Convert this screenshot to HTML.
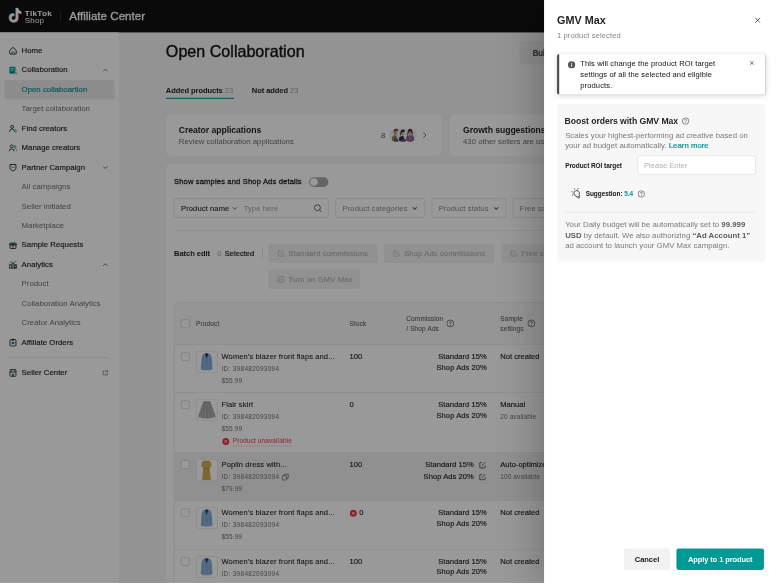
<!DOCTYPE html>
<html lang="en">
<head>
<meta charset="utf-8">
<title>Affiliate Center - Open Collaboration</title>
<style>
*{box-sizing:border-box;margin:0;padding:0}
html,body{width:778px;height:584px;overflow:hidden;background:#fff}
body{font-family:"Liberation Sans",Arial,sans-serif;color:#1f1f1f}
#stage{filter:opacity(0.9999);position:absolute;left:0;top:0;width:1440px;height:1079px;transform:scale(0.540278);transform-origin:0 0;overflow:hidden;background:#f5f5f5;font-size:14px}
.abs{position:absolute}
.med{-webkit-text-stroke:0.35px currentColor}
.b{font-weight:700}
/* header */
#hdr{position:absolute;left:0;top:0;width:1440px;height:60px;background:#121212;color:#fff}
#hdr .ttl{position:absolute;left:128px;top:17px;font-size:21.5px;line-height:26px;white-space:nowrap;-webkit-text-stroke:0.55px #fff}
#hdr .dv{position:absolute;left:111px;top:23px;width:1px;height:15px;background:#5a5a5a}
#hdr .tt{position:absolute;left:46px;top:18px;font-size:15px;line-height:13px;font-weight:700;letter-spacing:0.55px;white-space:nowrap}
#hdr .sh{position:absolute;left:46px;top:31px;font-size:15px;line-height:13px;letter-spacing:0.2px;white-space:nowrap}
/* sidebar */
#side{position:absolute;left:0;top:60px;width:220px;height:1021px;background:#fff}
.it{position:absolute;left:8px;width:204px;height:36px;line-height:35px;font-size:14.4px;letter-spacing:0.04px;white-space:nowrap;border-radius:4px;padding-left:32px;color:#1f1f1f;-webkit-text-stroke:0.25px currentColor}
.it.sub{color:#6e6e6e;-webkit-text-stroke:0}
.it.sel{background:#ebebeb;color:#009995;-webkit-text-stroke:0.25px currentColor}
.it svg.ic{position:absolute;left:8px;top:10px;width:16px;height:16px}
.it svg.ch{position:absolute;left:181px;top:12px;width:12px;height:12px}
/* main */
.card{position:absolute;background:#fff;border-radius:8px}
.ct{position:absolute;left:24px;top:18px;font-size:16px;line-height:22px;font-weight:700;letter-spacing:-0.12px;white-space:nowrap}
.cs{position:absolute;left:24px;top:40px;font-size:14.4px;line-height:20px;letter-spacing:0.0px;color:#707070;white-space:nowrap}
.btn-d{position:absolute;height:36px;border-radius:4px;background:#f2f2f2;color:#b4b4b4;font-size:14px;letter-spacing:0.3px;line-height:36px;white-space:nowrap;-webkit-text-stroke:0.3px currentColor}
.btn-d svg{position:absolute;left:16px;top:11px;width:14px;height:14px}
.btn-d span{position:absolute;left:37px;top:0}
.sel-box{position:absolute;height:36px;border:1px solid #d6d6d6;border-radius:4px;background:#fff;font-size:14px;letter-spacing:0.2px;line-height:34px;color:#8a8a8a;white-space:nowrap}
/* table */
#tbl{position:absolute;left:322px;top:560px;width:1200px;height:600px;border:1px solid #d9d9d9;border-radius:8px;overflow:hidden;background:#fff}
.row{position:absolute;left:0;width:1200px;border-top:1px solid #e3e3e3}
.cb{position:absolute;left:12px;width:16px;height:16px;border:1.5px solid #c4c4c4;border-radius:3px;background:#fff}
.th{position:absolute;font-size:12px;line-height:18px;color:#5e5e5e;white-space:nowrap;letter-spacing:0.25px;-webkit-text-stroke:0.12px currentColor}
.thumb{position:absolute;left:40px;top:12px;width:40px;height:40px;border:1px solid #e2e2e2;border-radius:5px;background:#fff;overflow:hidden}
.thumb svg{position:absolute;left:-1px;top:-1px;width:40px;height:40px}
.pn{position:absolute;left:87px;top:12px;font-size:14px;line-height:20px;letter-spacing:0.17px;white-space:nowrap;-webkit-text-stroke:0.15px currentColor}
.pid{position:absolute;left:87px;top:36px;font-size:12px;line-height:18px;color:#737373;white-space:nowrap;letter-spacing:0.52px}
.pp{position:absolute;left:87px;top:58px;font-size:12px;line-height:18px;color:#737373;white-space:nowrap;letter-spacing:0.3px}
.stk{position:absolute;left:324px;top:11px;font-size:14px;line-height:20px;white-space:nowrap;-webkit-text-stroke:0.25px currentColor}
.com{position:absolute;left:380px;width:198px;top:12px;font-size:14px;line-height:19.5px;text-align:right;white-space:nowrap;-webkit-text-stroke:0.25px currentColor;letter-spacing:0.1px}
.smp{position:absolute;left:603px;top:11px;font-size:14px;line-height:20px;white-space:nowrap;-webkit-text-stroke:0.25px currentColor}
.smp small{display:block;font-size:12px;line-height:18px;color:#737373;-webkit-text-stroke:0;margin-top:5px;letter-spacing:0.2px}
/* overlay + drawer */
#dim{position:absolute;left:0;top:0;width:1440px;height:1079px;background:rgba(0,0,0,0.4)}
#drw{position:absolute;left:1007px;top:0;width:433px;height:1081px;background:#fff;box-shadow:-16px 0 64px rgba(0,0,0,0.22)}
</style>
</head>
<body>
<div id="stage">

<!-- HEADER -->
<div id="hdr">
  <svg class="abs" style="left:14px;top:13px;width:28px;height:31px" viewBox="0 0 28 31">
    <path d="M15.5 2 h4.2 c0.3 3.2 2.3 5.6 5.6 6 v4.3 c-2.100 0-4.000-0.700-5.600-1.800 v9.500 c0 5.200-4.000 8.600-8.400 8.600 c-4.800 0-8.500-3.800-8.500-8.400 c0-5.000 4.200-8.900 9.600-8.300 v4.500 c-2.700-0.600-5.100 1.200-5.100 3.800 c0 2.300 1.800 4.000 4.000 4.000 c2.400 0 4.200-1.800 4.200-4.400 z" fill="#25f4ee" transform="translate(-1,-0.8)"/>
    <path d="M15.5 2 h4.2 c0.3 3.2 2.3 5.6 5.6 6 v4.3 c-2.100 0-4.000-0.700-5.600-1.800 v9.500 c0 5.200-4.000 8.600-8.400 8.600 c-4.800 0-8.500-3.800-8.500-8.400 c0-5.000 4.200-8.900 9.600-8.300 v4.500 c-2.700-0.600-5.100 1.200-5.100 3.800 c0 2.300 1.800 4.000 4.000 4.000 c2.400 0 4.200-1.800 4.200-4.400 z" fill="#fe2c55" transform="translate(1,0.8)"/>
    <path d="M15.5 2 h4.2 c0.3 3.2 2.3 5.600 5.600 6 v4.300 c-2.100 0-4.000-0.700-5.600-1.800 v9.500 c0 5.200-4.000 8.600-8.400 8.600 c-4.800 0-8.500-3.800-8.500-8.400 c0-5.000 4.200-8.900 9.600-8.300 v4.500 c-2.700-0.600-5.100 1.200-5.100 3.800 c0 2.300 1.800 4.000 4.000 4.000 c2.400 0 4.200-1.800 4.200-4.400 z" fill="#fff"/>
  </svg>
  <div class="tt">TikTok</div>
  <div class="sh">Shop</div>
  <div class="dv"></div>
  <div class="ttl">Affiliate Center</div>
</div>

<!-- SIDEBAR -->
<div id="side">
  <div class="it" style="top:16px"><svg class="ic" viewBox="0 0 16 16"><path d="M2 7 L8 1.700 L14 7 V12.800 a1.300 1.300 0 0 1 -1.300 1.300 H3.300 a1.300 1.300 0 0 1 -1.300 -1.300 Z" fill="none" stroke="#2b2b2b" stroke-width="1.700" stroke-linejoin="round"/><path d="M5.600 14 V12 a2.400 2.400 0 0 1 4.800 0 V14" fill="none" stroke="#009995" stroke-width="1.700"/></svg>Home</div>
  <div class="it" style="top:52px"><svg class="ic" viewBox="0 0 16 16"><rect x="1.500" y="1.500" width="11" height="13" rx="1.500" fill="#009995"/><rect x="4" y="4.500" width="6" height="1.400" fill="#fff"/><rect x="4" y="7.500" width="3.500" height="1.400" fill="#fff"/><circle cx="12" cy="9.500" r="1.800" fill="#fff" stroke="#009995" stroke-width="1"/><path d="M9 15 a3 3 0 0 1 6 0 z" fill="#fff" stroke="#009995" stroke-width="1"/></svg>Collaboration<svg class="ch" viewBox="0 0 12 12"><path d="M2 8 L6 4 L10 8" fill="none" stroke="#555" stroke-width="1.500"/></svg></div>
  <div class="it sub sel" style="top:88px">Open collaboartion</div>
  <div class="it sub" style="top:124px">Target collaboration</div>
  <div class="it" style="top:160px"><svg class="ic" viewBox="0 0 16 16"><circle cx="6.500" cy="4.800" r="2.800" fill="none" stroke="#2b2b2b" stroke-width="1.600"/><path d="M1.500 14 a5 5 0 0 1 8.500-3.500" fill="none" stroke="#2b2b2b" stroke-width="1.600"/><circle cx="12" cy="12" r="2" fill="none" stroke="#009995" stroke-width="1.500"/><path d="M13.500 13.500 L15 15" stroke="#009995" stroke-width="1.500"/></svg>Find creators</div>
  <div class="it" style="top:196px"><svg class="ic" viewBox="0 0 16 16"><circle cx="5.500" cy="4.800" r="2.600" fill="none" stroke="#2b2b2b" stroke-width="1.600"/><path d="M1 14 a4.500 4.500 0 0 1 9 0" fill="none" stroke="#2b2b2b" stroke-width="1.600"/><circle cx="11.500" cy="5.500" r="2" fill="none" stroke="#009995" stroke-width="1.400"/><path d="M11.500 9.500 a3.500 3.500 0 0 1 3.500 4.500" fill="none" stroke="#009995" stroke-width="1.400"/></svg>Manage creators</div>
  <div class="it" style="top:232px"><svg class="ic" viewBox="0 0 16 16"><path d="M2.500 2.500 H13.500 V9 C13.500 11.500 11 13.500 8 14.500 C5 13.500 2.500 11.500 2.500 9 Z" fill="none" stroke="#2b2b2b" stroke-width="1.700" stroke-linejoin="round"/><path d="M5.500 6 a2.500 2.500 0 0 0 5 0" fill="none" stroke="#009995" stroke-width="1.500"/></svg>Partner Campaign<svg class="ch" viewBox="0 0 12 12"><path d="M2 4 L6 8 L10 4" fill="none" stroke="#555" stroke-width="1.500"/></svg></div>
  <div class="it sub" style="top:268px">All campaigns</div>
  <div class="it sub" style="top:304px">Seller initiated</div>
  <div class="it sub" style="top:340px">Marketplace</div>
  <div class="it" style="top:376px"><svg class="ic" viewBox="0 0 16 16"><rect x="2.500" y="7" width="11" height="7" rx="1" fill="none" stroke="#2b2b2b" stroke-width="1.600"/><rect x="1.500" y="4.500" width="13" height="3" rx="0.800" fill="none" stroke="#2b2b2b" stroke-width="1.500"/><path d="M8 4.500 V14" stroke="#2b2b2b" stroke-width="1.500"/><path d="M8 4.500 C6 1 3.500 2 5 4.500 M8 4.500 C10 1 12.500 2 11 4.500" fill="none" stroke="#009995" stroke-width="1.400"/></svg>Sample Requests</div>
  <div class="it" style="top:412px"><svg class="ic" viewBox="0 0 16 16"><rect x="1.500" y="8" width="3.400" height="6.500" fill="none" stroke="#2b2b2b" stroke-width="1.400"/><rect x="6.300" y="6" width="3.400" height="8.500" fill="none" stroke="#2b2b2b" stroke-width="1.400"/><rect x="11.100" y="8" width="3.400" height="6.500" fill="none" stroke="#2b2b2b" stroke-width="1.400"/><path d="M1.500 5 L5.500 2.500 L9 4.500 L14 1.500" fill="none" stroke="#009995" stroke-width="1.500"/></svg>Analytics<svg class="ch" viewBox="0 0 12 12"><path d="M2 8 L6 4 L10 8" fill="none" stroke="#555" stroke-width="1.500"/></svg></div>
  <div class="it sub" style="top:448px">Product</div>
  <div class="it sub" style="top:484px">Collaboration Analytics</div>
  <div class="it sub" style="top:520px">Creator Analytics</div>
  <div class="it" style="top:556px"><svg class="ic" viewBox="0 0 16 16"><rect x="2.500" y="2.500" width="11" height="12" rx="1.500" fill="none" stroke="#2b2b2b" stroke-width="1.700"/><rect x="5.500" y="1" width="5" height="3" rx="0.800" fill="#2b2b2b"/><rect x="5.500" y="6.500" width="5" height="4.500" fill="#009995"/></svg>Affiliate Orders</div>
  <div class="abs" style="left:16px;top:601px;width:186px;height:1px;background:#dcdcdc"></div>
  <div class="it" style="top:612px"><svg class="ic" viewBox="0 0 16 16"><rect x="2.500" y="2" width="11" height="12.500" rx="1.200" fill="none" stroke="#2b2b2b" stroke-width="1.600"/><path d="M2.500 6.500 H13.500" stroke="#2b2b2b" stroke-width="1.600"/><rect x="6" y="9.500" width="4" height="5" fill="#009995"/><path d="M5 2 V6 M11 2 V6" stroke="#2b2b2b" stroke-width="1.200"/></svg>Seller Center<svg class="ch" viewBox="0 0 12 12"><path d="M5 2 H2 V10 H10 V7" fill="none" stroke="#777" stroke-width="1.300"/><path d="M7 2 H10 V5 M10 2 L5.500 6.500" fill="none" stroke="#777" stroke-width="1.300"/></svg></div>
</div>

<!-- MAIN -->
<div id="main">
  <div class="abs" style="left:307px;top:75px;font-size:29.8px;line-height:40px;white-space:nowrap;color:#161616;-webkit-text-stroke:0.75px #161616">Open Collaboration</div>
  <div class="abs" style="left:962px;top:76px;width:200px;height:44px;border-radius:4px;background:#ebebeb"></div>
  <div class="abs med" style="left:986px;top:88px;font-size:15.5px;line-height:20px;white-space:nowrap">Bulk actions</div>

  <div class="abs b" style="left:307px;top:158px;font-size:14px;line-height:20px;letter-spacing:-0.15px;white-space:nowrap">Added products <span style="font-weight:400;color:#a3a3a3;letter-spacing:0">23</span></div>
  <div class="abs" style="left:307px;top:181px;width:126px;height:2px;background:#009995"></div>
  <div class="abs b" style="left:466px;top:158px;font-size:14px;line-height:20px;letter-spacing:-0.15px;white-space:nowrap">Not added <span style="font-weight:400;color:#a3a3a3;letter-spacing:0">23</span></div>

  <div class="card" style="left:307px;top:212px;width:510px;height:76px">
    <div class="ct">Creator applications</div>
    <div class="cs">Review collaboration applications</div>
    <div class="abs" style="left:398px;top:27.500px;font-size:14.5px;line-height:20px;color:#555">8</div>
    <svg class="abs" style="left:413px;top:24px;width:52px;height:28px" viewBox="0 0 52 28">
      <defs><clipPath id="c1"><circle cx="13" cy="14" r="12.500"/></clipPath><clipPath id="c2"><circle cx="26" cy="14" r="12.500"/></clipPath><clipPath id="c3"><circle cx="39" cy="14" r="12.500"/></clipPath></defs>
      <g clip-path="url(#c1)"><rect x="0" y="0" width="27" height="28" fill="#ececec"/><path d="M5 28 L6 17 Q13 12 20 17 L21 28 Z" fill="#8f7f4a"/><path d="M9 28 L10 20 H16 L17 28 Z" fill="#47698c"/><ellipse cx="13" cy="9.500" rx="4" ry="5" fill="#c99a78"/><path d="M8.500 9 Q8 3 13 2.500 Q18.500 3 17.500 9 Q16 5.500 13 5.500 Q10 5.500 8.500 9 Z" fill="#5e3f26"/></g>
      <g clip-path="url(#c2)"><rect x="13" y="0" width="27" height="28" fill="#e6e8ec"/><path d="M18 28 L19 18 Q26 13 33 18 L34 28 Z" fill="#2a3152"/><path d="M23 28 L24 22 H28 L29 28 Z" fill="#c7455c"/><ellipse cx="26" cy="10.500" rx="3.800" ry="4.800" fill="#d3a58a"/><path d="M20.500 18 Q20 3.500 26 3.500 Q32 3.500 31.500 18 Q30 9 26 7.500 Q22 9 20.500 18 Z" fill="#251d28"/></g>
      <g clip-path="url(#c3)"><rect x="26" y="0" width="27" height="28" fill="#eeeeee"/><path d="M31 28 L32 17 Q39 12 46 17 L47 28 Z" fill="#4b7cb3"/><path d="M35.500 28 L36 16 H42 L42.500 28 Z" fill="#de4f79"/><ellipse cx="39" cy="9.500" rx="3.600" ry="4.600" fill="#d5a68c"/><path d="M34 20 Q33 2.500 39 2.500 Q45 2.500 44 20 Q43 8 39 6.500 Q35 8 34 20 Z" fill="#47291f"/></g>
    </svg>
    <svg class="abs" style="left:472px;top:31px;width:14px;height:14px" viewBox="0 0 14 14"><path d="M4.500 2.300 L9.500 7 L4.500 11.700" fill="none" stroke="#707070" stroke-width="1.700"/></svg>
  </div>
  <div class="card" style="left:833px;top:212px;width:510px;height:76px">
    <div class="ct">Growth suggestions</div>
    <div class="cs">430 other sellers are using these</div>
  </div>

  <div class="card" style="left:307px;top:304px;width:1200px;height:900px;border-radius:8px"></div>
  <div class="abs" style="left:322px;top:326px;font-size:14px;line-height:20px;letter-spacing:0.3px;white-space:nowrap;-webkit-text-stroke:0.5px #1f1f1f">Show samples and Shop Ads details</div>
  <div class="abs" style="left:572px;top:328px;width:36px;height:18px;border-radius:9px;background:#a8a8a8"><div class="abs" style="left:2px;top:2px;width:14px;height:14px;border-radius:7px;background:#fff"></div></div>

  <div class="sel-box" style="left:322px;top:367px;width:286px">
    <span class="abs" style="left:12px;top:0;color:#1f1f1f;-webkit-text-stroke:0.15px #1f1f1f;letter-spacing:0.2px">Product name</span>
    <svg class="abs" style="left:106px;top:12px;width:11px;height:11px" viewBox="0 0 12 12"><path d="M2 4 L6 8 L10 4" fill="none" stroke="#444" stroke-width="1.500"/></svg>
    <span class="abs" style="left:128px;top:0;color:#a6a6a6">Type here</span>
    <svg class="abs" style="left:257px;top:9px;width:17px;height:17px" viewBox="0 0 17 17"><circle cx="7.500" cy="7.500" r="5.500" fill="none" stroke="#555" stroke-width="1.600"/><path d="M11.500 11.500 L15.500 15.500" stroke="#555" stroke-width="1.600"/></svg>
  </div>
  <div class="sel-box" style="left:621px;top:367px;width:166px"><span class="abs" style="left:12px;top:0">Product categories</span><svg class="abs" style="left:140px;top:12px;width:11px;height:11px" viewBox="0 0 12 12"><path d="M2 4 L6 8 L10 4" fill="none" stroke="#5a5a5a" stroke-width="2.200"/></svg></div>
  <div class="sel-box" style="left:799px;top:367px;width:138px"><span class="abs" style="left:12px;top:0">Product status</span><svg class="abs" style="left:113px;top:12px;width:11px;height:11px" viewBox="0 0 12 12"><path d="M2 4 L6 8 L10 4" fill="none" stroke="#5a5a5a" stroke-width="2.200"/></svg></div>
  <div class="sel-box" style="left:949px;top:367px;width:140px"><span class="abs" style="left:12px;top:0">Free samples</span></div>

  <div class="abs" style="left:322px;top:426px;width:1100px;height:1px;background:#e0e0e0"></div>

  <div class="abs b" style="left:322px;top:459px;font-size:14px;line-height:20px;letter-spacing:-0.1px;white-space:nowrap">Batch edit</div>
  <div class="abs" style="left:402px;top:459px;font-size:14px;line-height:20px;white-space:nowrap;color:#9a9a9a">0</div>
  <div class="abs med" style="left:416px;top:459px;font-size:14px;line-height:20px;white-space:nowrap">Selected</div>
  <div class="abs" style="left:485px;top:461px;width:1px;height:16px;background:#cfcfcf"></div>

  <div class="btn-d" style="left:497px;top:451px;width:202px"><svg viewBox="0 0 14 14"><path d="M6.500 2 H3 a1 1 0 0 0 -1 1 V11 a1 1 0 0 0 1 1 H11 a1 1 0 0 0 1 -1 V7.500" fill="none" stroke="#b4b4b4" stroke-width="1.400"/><path d="M6 8 L12 2" stroke="#b4b4b4" stroke-width="1.500"/></svg><span>Standard commissions</span></div>
  <div class="btn-d" style="left:711px;top:451px;width:204px"><svg viewBox="0 0 14 14"><path d="M6.500 2 H3 a1 1 0 0 0 -1 1 V11 a1 1 0 0 0 1 1 H11 a1 1 0 0 0 1 -1 V7.500" fill="none" stroke="#b4b4b4" stroke-width="1.400"/><path d="M6 8 L12 2" stroke="#b4b4b4" stroke-width="1.500"/></svg><span>Shop Ads commissions</span></div>
  <div class="btn-d" style="left:928px;top:451px;width:150px"><svg viewBox="0 0 14 14"><path d="M6.500 2 H3 a1 1 0 0 0 -1 1 V11 a1 1 0 0 0 1 1 H11 a1 1 0 0 0 1 -1 V7.500" fill="none" stroke="#b4b4b4" stroke-width="1.400"/><path d="M6 8 L12 2" stroke="#b4b4b4" stroke-width="1.500"/></svg><span>Free samples</span></div>
  <div class="btn-d" style="left:497px;top:499px;width:169px"><svg viewBox="0 0 14 14"><rect x="1.500" y="2" width="11" height="10" rx="1.500" fill="none" stroke="#b4b4b4" stroke-width="1.400"/><path d="M3.500 8.500 L6 6 L8 8 L10.500 5" fill="none" stroke="#b4b4b4" stroke-width="1.300"/></svg><span>Turn on GMV Max</span></div>

  <!-- TABLE -->
  <div id="tbl">
    <div class="abs" style="left:0;top:0;width:1200px;height:76px;background:#f8f8f8"></div>
    <div class="cb" style="top:30px"></div>
    <div class="th" style="left:40px;top:29px">Product</div>
    <div class="th" style="left:324px;top:29px">Stock</div>
    <div class="th" style="left:429px;top:20px">Commission<br>/ Shop Ads</div>
    <svg class="abs" style="left:503px;top:30px;width:15px;height:15px" viewBox="0 0 14 14"><circle cx="7" cy="7" r="6" fill="none" stroke="#4a4a4a" stroke-width="1.200"/><path d="M5.200 5.600 a1.800 1.800 0 1 1 2.600 1.600 c-0.600 0.300-0.800 0.600-0.800 1.300" fill="none" stroke="#4a4a4a" stroke-width="1.200"/><circle cx="7" cy="10.300" r="0.800" fill="#4a4a4a"/></svg>
    <div class="th" style="left:603px;top:20px">Sample<br>settings</div>
    <svg class="abs" style="left:653px;top:30px;width:15px;height:15px" viewBox="0 0 14 14"><circle cx="7" cy="7" r="6" fill="none" stroke="#4a4a4a" stroke-width="1.200"/><path d="M5.200 5.600 a1.800 1.800 0 1 1 2.600 1.600 c-0.600 0.300-0.800 0.600-0.800 1.300" fill="none" stroke="#4a4a4a" stroke-width="1.200"/><circle cx="7" cy="10.300" r="0.800" fill="#4a4a4a"/></svg>

    <!-- row 1 -->
    <div class="row" style="top:76px;height:89px">
      <div class="cb" style="top:14px"></div>
      <div class="thumb"><svg viewBox="0 0 40 40"><path d="M15.500 4.500 L23.500 4.500 L27.500 7 L29 14 L30.500 33.500 L27 34.500 L27 35.500 L12 35.500 L12 34.500 L8.500 33.500 L10 14 L11.500 7 Z" fill="#8db4da"/><path d="M12.500 12 L12 34 M26.500 12 L27 34" stroke="#7199c0" stroke-width="0.900" fill="none"/><path d="M16.500 4.500 L19.500 14 L22.500 4.500 Z" fill="#1d2a3c"/><path d="M16 5 L19.500 15 L23 5" stroke="#6a91b8" stroke-width="1" fill="none"/><path d="M19.500 15 V35" stroke="#7199c0" stroke-width="0.800"/><circle cx="17.500" cy="20" r="0.700" fill="#5b7fa5"/><circle cx="21.500" cy="20" r="0.700" fill="#5b7fa5"/><circle cx="17.500" cy="25" r="0.700" fill="#5b7fa5"/><circle cx="21.500" cy="25" r="0.700" fill="#5b7fa5"/></svg></div>
      <div class="pn">Women's blazer front flaps and...</div>
      <div class="pid">ID: 398482093094</div>
      <div class="pp">$55.99</div>
      <div class="stk">100</div>
      <div class="com">Standard 15%<br>Shop Ads 20%</div>
      <div class="smp">Not created</div>
    </div>
    <!-- row 2 -->
    <div class="row" style="top:165px;height:111px">
      <div class="cb" style="top:14px"></div>
      <div class="thumb"><svg viewBox="0 0 40 40"><path d="M14 3.500 H26 L30 14 L36.500 32 Q33 35 28 34 Q24 36.500 20 35 Q15 36.500 11 34.500 Q7 35 3.500 32 L10 14 Z" fill="#b2b2b2"/><path d="M17 4 L12 34 M20 4 L20 35 M23 4 L28 34" stroke="#8f8f8f" stroke-width="1.300" fill="none"/><path d="M14.500 4 L6 32 M25.500 4 L34 32" stroke="#9c9c9c" stroke-width="1" fill="none"/></svg></div>
      <div class="pn">Flair skirt</div>
      <div class="pid">ID: 398482093094</div>
      <div class="pp">$55.99</div>
      <svg class="abs" style="left:88px;top:83px;width:14px;height:14px" viewBox="0 0 14 14"><circle cx="7" cy="7" r="6.500" fill="#f2334f"/><path d="M4.600 4.600 L9.400 9.400 M9.400 4.600 L4.600 9.400" stroke="#fff" stroke-width="1.500"/></svg>
      <div class="abs" style="left:108px;top:80px;font-size:12px;line-height:18px;color:#f2334f;white-space:nowrap;letter-spacing:0.2px;border-bottom:1px dashed rgba(242,51,79,0.55);height:19px">Product unavailable</div>
      <div class="stk">0</div>
      <div class="com">Standard 15%<br>Shop Ads 20%</div>
      <div class="smp">Manual<small>20 available</small></div>
    </div>
    <!-- row 3 -->
    <div class="row" style="top:276px;height:89px;background:#f0f0f0">
      <div class="cb" style="top:14px"></div>
      <div class="thumb"><svg viewBox="0 0 40 40"><path d="M14.500 2.500 Q19 5 23.500 2.500 L27 5 L28.500 14 L25.500 15 L25 17.500 L27.500 38.500 L11 38.500 L13 17.500 L12.500 15 L9.500 14 L11 5 Z" fill="#d2b054"/><path d="M13 17 H25" stroke="#b39139" stroke-width="1.300"/><path d="M19 18 L18.500 38 M21 18 L23 24" stroke="#bb9a40" stroke-width="0.900" fill="none"/><path d="M15.500 3 Q19 6.500 22.500 3" stroke="#a88732" stroke-width="0.900" fill="none"/></svg></div>
      <div class="pn">Poplin dress with...</div>
      <div class="pid">ID: 398482093094</div>
      <svg class="abs" style="left:198px;top:38px;width:14px;height:14px" viewBox="0 0 14 14"><rect x="1.500" y="4.500" width="8" height="8" rx="1" fill="none" stroke="#555" stroke-width="1.300"/><path d="M4.500 4.500 V2.500 a1 1 0 0 1 1 -1 H11.500 a1 1 0 0 1 1 1 V8.500 a1 1 0 0 1 -1 1 H9.500" fill="none" stroke="#555" stroke-width="1.300"/></svg>
      <div class="pp">$79.99</div>
      <div class="stk">100</div>
      <div class="com" style="width:174px;line-height:23px;top:10px">Standard 15%<br>Shop Ads 20%</div>
      <svg class="abs" style="left:563px;top:16px;width:14px;height:14px" viewBox="0 0 14 14"><path d="M6.500 2 H3 a1 1 0 0 0 -1 1 V11 a1 1 0 0 0 1 1 H11 a1 1 0 0 0 1 -1 V7.500" fill="none" stroke="#444" stroke-width="1.500"/><path d="M6 8 L12 2" stroke="#444" stroke-width="1.600"/></svg>
      <svg class="abs" style="left:563px;top:38px;width:14px;height:14px" viewBox="0 0 14 14"><path d="M6.500 2 H3 a1 1 0 0 0 -1 1 V11 a1 1 0 0 0 1 1 H11 a1 1 0 0 0 1 -1 V7.500" fill="none" stroke="#444" stroke-width="1.500"/><path d="M6 8 L12 2" stroke="#444" stroke-width="1.600"/></svg>
      <div class="smp">Auto-optimized<small>100 available</small></div>
    </div>
    <!-- row 4 -->
    <div class="row" style="top:365px;height:90px">
      <div class="cb" style="top:14px"></div>
      <div class="thumb"><svg viewBox="0 0 40 40"><path d="M15.500 4.500 L23.500 4.500 L27.500 7 L29 14 L30.500 33.500 L27 34.500 L27 35.500 L12 35.500 L12 34.500 L8.500 33.500 L10 14 L11.500 7 Z" fill="#8db4da"/><path d="M12.500 12 L12 34 M26.500 12 L27 34" stroke="#7199c0" stroke-width="0.900" fill="none"/><path d="M16.500 4.500 L19.500 14 L22.500 4.500 Z" fill="#1d2a3c"/><path d="M16 5 L19.500 15 L23 5" stroke="#6a91b8" stroke-width="1" fill="none"/><path d="M19.500 15 V35" stroke="#7199c0" stroke-width="0.800"/><circle cx="17.500" cy="20" r="0.700" fill="#5b7fa5"/><circle cx="21.500" cy="20" r="0.700" fill="#5b7fa5"/><circle cx="17.500" cy="25" r="0.700" fill="#5b7fa5"/><circle cx="21.500" cy="25" r="0.700" fill="#5b7fa5"/></svg></div>
      <div class="pn">Women's blazer front flaps and...</div>
      <div class="pid">ID: 398482093094</div>
      <div class="pp">$55.99</div>
      <svg class="abs" style="left:324px;top:16px;width:14px;height:14px" viewBox="0 0 14 14"><circle cx="7" cy="7" r="6.500" fill="#f2334f"/><path d="M4.600 4.600 L9.400 9.400 M9.400 4.600 L4.600 9.400" stroke="#fff" stroke-width="1.500"/></svg>
      <div class="stk" style="left:342px">0</div>
      <div class="com">Standard 15%<br>Shop Ads 20%</div>
      <div class="smp">Not created</div>
    </div>
    <!-- row 5 -->
    <div class="row" style="top:455px;height:90px">
      <div class="cb" style="top:14px"></div>
      <div class="thumb"><svg viewBox="0 0 40 40"><path d="M15.500 4.500 L23.500 4.500 L27.500 7 L29 14 L30.500 33.500 L27 34.500 L27 35.500 L12 35.500 L12 34.500 L8.500 33.500 L10 14 L11.500 7 Z" fill="#8db4da"/><path d="M12.500 12 L12 34 M26.500 12 L27 34" stroke="#7199c0" stroke-width="0.900" fill="none"/><path d="M16.500 4.500 L19.500 14 L22.500 4.500 Z" fill="#1d2a3c"/><path d="M16 5 L19.500 15 L23 5" stroke="#6a91b8" stroke-width="1" fill="none"/><path d="M19.500 15 V35" stroke="#7199c0" stroke-width="0.800"/><circle cx="17.500" cy="20" r="0.700" fill="#5b7fa5"/><circle cx="21.500" cy="20" r="0.700" fill="#5b7fa5"/><circle cx="17.500" cy="25" r="0.700" fill="#5b7fa5"/><circle cx="21.500" cy="25" r="0.700" fill="#5b7fa5"/></svg></div>
      <div class="pn">Women's blazer front flaps and...</div>
      <div class="pid">ID: 398482093094</div>
      <div class="pp">$55.99</div>
      <div class="stk">100</div>
      <div class="com">Standard 15%<br>Shop Ads 20%</div>
      <div class="smp">Not created</div>
    </div>
  </div>
</div>

<div id="dim"></div>

<!-- DRAWER -->
<div id="drw">
  <div class="abs b" style="left:24px;top:25px;font-size:20px;line-height:26px;white-space:nowrap;color:#242424">GMV Max</div>
  <svg class="abs" style="left:390px;top:32px;width:11px;height:11px" viewBox="0 0 11 11"><path d="M1 1 L10 10 M10 1 L1 10" stroke="#3d3d3d" stroke-width="1.500"/></svg>
  <div class="abs" style="left:24px;top:56px;font-size:14px;line-height:20px;letter-spacing:0.2px;white-space:nowrap;color:#858585">1 product selected</div>

  <div class="abs" style="left:24px;top:100px;width:385px;height:75px;border-radius:4px;background:#fff;box-shadow:0 2px 10px rgba(0,0,0,0.16),0 0 2px rgba(0,0,0,0.10);overflow:hidden">
    <div class="abs" style="left:0;top:0;width:4px;height:75px;background:#4d4d4d"></div>
  </div>
  <svg class="abs" style="left:44px;top:113px;width:14px;height:14px" viewBox="0 0 14 14"><circle cx="7" cy="7" r="6.800" fill="#545454"/><rect x="6.200" y="6" width="1.700" height="4.600" fill="#fff"/><circle cx="7" cy="4" r="1" fill="#fff"/></svg>
  <div class="abs" style="left:67px;top:108px;width:300px;font-size:14px;line-height:20px;letter-spacing:0.2px;color:#1f1f1f;-webkit-text-stroke:0.08px #1f1f1f">This will change the product ROI target settings of all the selected and eligible products.</div>
  <svg class="abs" style="left:380px;top:112px;width:9px;height:9px" viewBox="0 0 9 9"><path d="M1 1 L8 8 M8 1 L1 8" stroke="#4a4a4a" stroke-width="1.400"/></svg>

  <div class="abs" style="left:24px;top:192px;width:385px;height:292px;border-radius:6px;background:#f7f7f7"></div>
  <div class="abs b" style="left:38px;top:213px;font-size:16px;line-height:22px;letter-spacing:-0.1px;white-space:nowrap;color:#262626">Boost orders with GMV Max</div>
  <svg class="abs" style="left:255px;top:217px;width:14px;height:14px" viewBox="0 0 14 14"><circle cx="7" cy="7" r="6" fill="none" stroke="#4a4a4a" stroke-width="1.200"/><path d="M5.200 5.600 a1.800 1.800 0 1 1 2.600 1.600 c-0.600 0.300-0.800 0.600-0.800 1.300" fill="none" stroke="#4a4a4a" stroke-width="1.200"/><circle cx="7" cy="10.300" r="0.800" fill="#4a4a4a"/></svg>
  <div class="abs" style="left:39px;top:240.500px;width:360px;font-size:14.4px;line-height:19px;letter-spacing:0.03px;color:#7a7a7a">Scales your highest-performing ad creative based on your ad budget automatically. <span style="color:#009995;-webkit-text-stroke:0.4px #009995">Learn more</span></div>
  <div class="abs b" style="left:39px;top:298px;font-size:12px;line-height:18px;letter-spacing:-0.1px;white-space:nowrap;color:#161616">Product ROI target</div>
  <div class="abs" style="left:173px;top:288px;width:219px;height:35px;border:1px solid #d4d4d4;border-radius:4px;background:#fff"></div>
  <div class="abs" style="left:185px;top:296px;font-size:14px;line-height:20px;white-space:nowrap;color:#b0b0b0">Please Enter</div>
  <svg class="abs" style="left:49px;top:346px;width:22px;height:24px" viewBox="0 0 22 24"><g transform="rotate(-28 12 13)" fill="none" stroke="#2b2b2b" stroke-width="1.350"><path d="M12 6.500 a5.200 5.200 0 0 1 3 9.400 V18.500 H9 V15.900 A5.200 5.200 0 0 1 12 6.500 Z"/><path d="M9.800 20.800 H14.200"/><path d="M12 1.200 V3.800 M5.200 4.500 L6.900 6.300 M18.800 4.500 L17.100 6.300 M2.800 10.800 H5.200"/></g></svg>
  <div class="abs b" style="left:77px;top:350px;font-size:12px;line-height:18px;letter-spacing:-0.1px;white-space:nowrap;color:#161616">Suggestion: <span style="color:#009995">5.4</span></div>
  <svg class="abs" style="left:173px;top:352px;width:14px;height:14px" viewBox="0 0 14 14"><circle cx="7" cy="7" r="6" fill="none" stroke="#4a4a4a" stroke-width="1.200"/><path d="M5.200 5.600 a1.800 1.800 0 1 1 2.600 1.600 c-0.600 0.300-0.800 0.600-0.800 1.300" fill="none" stroke="#4a4a4a" stroke-width="1.200"/><circle cx="7" cy="10.300" r="0.800" fill="#4a4a4a"/></svg>
  <div class="abs" style="left:39px;top:393px;width:353px;height:1px;background:#e2e2e2"></div>
  <div class="abs" style="left:39px;top:406px;width:362px;font-size:14.4px;line-height:19.500px;letter-spacing:0.02px;color:#7a7a7a">Your Daily budget will be automatically set to <b style="color:#5c5c5c">99.999 USD</b> by default. We also authorizing <b style="color:#5c5c5c">&ldquo;Ad Account 1&rdquo;</b> ad account to launch your GMV Max campaign.</div>

  <div class="abs b" style="left:148px;top:1015px;width:85px;height:40px;border-radius:4px;background:#f2f2f2;font-size:14px;line-height:40px;text-align:center;color:#161616;letter-spacing:-0.1px">Cancel</div>
  <div class="abs b" style="left:245px;top:1015px;width:162px;height:40px;border-radius:4px;background:#009995;font-size:14px;line-height:40px;text-align:center;color:#fff;letter-spacing:-0.25px">Apply to 1 product</div>
</div>

</div>
</body>
</html>
